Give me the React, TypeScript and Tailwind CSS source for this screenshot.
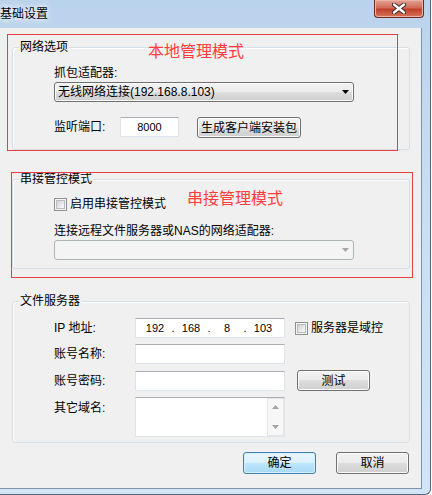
import type { ReactNode } from "react";

function Check() {
    return (
        <span className="flex h-[13px] w-[13px] shrink-0 items-center justify-center border border-[#8e8f8f] bg-[#f4f4f4]">
            <span className="h-[9px] w-[9px] border border-[#b8bcc0] bg-linear-to-br from-[#d0d3d7] to-[#f9f9f9]" />
        </span>
    );
}

function Arrow({ color }: { color: string }) {
    return (
        <svg width="7" height="4" viewBox="0 0 7 4" className="ml-auto mr-[4px]">
            <polygon points="0,0 7,0 3.5,4" fill={color} />
        </svg>
    );
}

function Combo({ text, disabled }: { text?: string; disabled?: boolean }) {
    if (disabled) {
        return (
            <div className="mt-[2px] flex h-[20px] w-[300px] items-center rounded-[3px] border border-[#adb2b5] bg-[#f4f4f4]">
                <Arrow color="#a6a6a6" />
            </div>
        );
    }
    return (
        <div className="mt-[2px] flex h-[20px] w-[300px] items-center rounded-[3px] border border-[#707070] bg-[linear-gradient(#f2f2f2,#ebebeb_50%,#dddddd_50%,#cfcfcf)] pl-[3px] shadow-[inset_0_0_0_1px_#fbfbfb] leading-[18px]">
            <span>{text}</span>
            <Arrow color="#000" />
        </div>
    );
}

function Btn({ children, className }: { children: ReactNode; className: string }) {
    return (
        <div
            className={
                "flex items-center justify-center rounded-[3px] border border-[#707070] bg-[linear-gradient(#f2f2f2,#ebebeb_50%,#dddddd_50%,#cfcfcf)] shadow-[inset_0_0_0_1px_#fcfcfc] " +
                className
            }
        >
            {children}
        </div>
    );
}

function Field({ children, className }: { children?: ReactNode; className: string }) {
    return (
        <div
            className={
                "h-[20px] border border-[#dfe3ea] border-t-[#abadb3] bg-white " + className
            }
        >
            {children}
        </div>
    );
}

function Group({
    title,
    className,
    children,
}: {
    title: string;
    className: string;
    children: ReactNode;
}) {
    return (
        <div
            className={
                "relative ml-[12px] w-[398px] rounded-[3px] border border-[#d5dfe5] shadow-[inset_1px_1px_0_#fff] " +
                className
            }
        >
            <span className="absolute left-[6px] top-[-8px] bg-[#f0f0f0] px-[1px] leading-[14px]">
                {title}
            </span>
            {children}
        </div>
    );
}

export default function App() {
    return (
        <div className="relative h-[495px] w-[432px] bg-white font-['Liberation_Sans','Noto_Sans_CJK_SC',sans-serif] text-[12px] text-black">
            <div className="flex h-[495px] w-[431px] flex-col rounded-br-[6px] border-r border-b border-[#53677d] bg-[linear-gradient(#bad3ec,#c9def3_40%,#d2e5f7)]">
                {/* title bar */}
                <div className="flex h-[28px] items-start justify-between">
                    <span className="mt-[6px] leading-[16px] [text-shadow:0_0_5px_#fff,0_0_8px_#fff]">
                        基础设置
                    </span>
                    <div className="mr-[6px] flex h-[18px] w-[50px] items-center justify-center rounded-b-[4px] border border-t-0 border-[#6b2a22] bg-[linear-gradient(#e3a394,#d06a56_45%,#c0402d_55%,#d77558)] shadow-[inset_0_0_0_1px_#eab3a6]">
                        <svg width="14" height="11" viewBox="0 0 14 11">
                            <path
                                d="M2 1.5 L12 9.5 M12 1.5 L2 9.5"
                                stroke="#3b2522"
                                strokeWidth="4.2"
                                strokeLinecap="round"
                            />
                            <path
                                d="M2 1.5 L12 9.5 M12 1.5 L2 9.5"
                                stroke="#fff"
                                strokeWidth="2.4"
                                strokeLinecap="round"
                            />
                        </svg>
                    </div>
                </div>

                {/* client area */}
                <div className="h-[461px] w-[422px] border-r border-b border-[#7f93a8] bg-[#f0f0f0]">
                    <Group title="网络选项" className="mt-[19px] h-[103px]">
                        <div className="pl-[41px] pt-[18px]">
                            <div className="leading-[14px]">抓包适配器:</div>
                            <Combo text="无线网络连接(192.168.8.103)" />
                            <div className="mt-[15px] flex items-start">
                                <span className="w-[66px] leading-[20px]">监听端口:</span>
                                <Field className="w-[59px] text-center text-[11px] leading-[18px]">
                                    8000
                                </Field>
                                <Btn className="ml-[18px] h-[21px] w-[104px]">生成客户端安装包</Btn>
                            </div>
                        </div>
                    </Group>

                    <Group title="串接管控模式" className="mt-[29px] h-[90px]">
                        <div className="pl-[41px] pt-[17px]">
                            <div className="flex h-[14px] items-center">
                                <Check />
                                <span className="ml-[3px] leading-[14px]">启用串接管控模式</span>
                            </div>
                            <div className="mt-[13px] leading-[14px]">
                                连接远程文件服务器或NAS的网络适配器:
                            </div>
                            <Combo disabled />
                        </div>
                    </Group>

                    <Group title="文件服务器" className="mt-[32px] h-[142px]">
                        <div className="flex flex-col gap-[6px] pl-[41px] pt-[16px]">
                            <div className="flex items-center">
                                <span className="w-[81px] leading-[20px]">IP 地址:</span>
                                <Field className="flex w-[150px] pl-[4px] text-[11px] leading-[18px]">
                                    {["192", "168", "8", "103"].map((n, i) => (
                                        <span key={i} className="flex w-[36px]">
                                            <span className="w-[30px] text-center">{n}</span>
                                            {i < 3 && <span className="w-[6px] text-center">.</span>}
                                        </span>
                                    ))}
                                </Field>
                                <span className="ml-[10px]">
                                    <Check />
                                </span>
                                <span className="ml-[3px] leading-[14px]">服务器是域控</span>
                            </div>
                            <div className="flex items-center">
                                <span className="w-[81px] leading-[20px]">账号名称:</span>
                                <Field className="w-[150px]" />
                            </div>
                            <div className="flex items-center">
                                <span className="w-[81px] leading-[20px]">账号密码:</span>
                                <Field className="w-[150px]" />
                                <Btn className="ml-[12px] h-[21px] w-[73px]">测试</Btn>
                            </div>
                            <div className="flex items-start">
                                <span className="mt-[4px] w-[81px] leading-[14px]">其它域名:</span>
                                <div className="flex h-[40px] w-[150px] border border-[#dfe3ea] border-t-[#abadb3] bg-white">
                                    <div className="flex-1" />
                                    <div className="flex w-[17px] flex-col items-center justify-between border border-[#e6e6e6] bg-[#f7f7f7] py-[6px]">
                                        <svg width="7" height="4" viewBox="0 0 7 4">
                                            <polygon points="0,4 7,4 3.5,0" fill="#a3a3a3" />
                                        </svg>
                                        <svg width="7" height="4" viewBox="0 0 7 4">
                                            <polygon points="0,0 7,0 3.5,4" fill="#a3a3a3" />
                                        </svg>
                                    </div>
                                </div>
                            </div>
                        </div>
                    </Group>

                    <div className="mt-[9px] flex justify-end gap-[20px] pr-[12px]">
                        <div className="flex h-[22px] w-[73px] items-center justify-center rounded-[3px] border border-[#3c7fb1] bg-[linear-gradient(#eaf6fd,#d9f0fc_50%,#bee6fd_50%,#a7d9f5)] shadow-[inset_0_0_0_1px_#d7f0fd]">
                            确定
                        </div>
                        <Btn className="h-[22px] w-[73px]">取消</Btn>
                    </div>
                </div>
            </div>

            {/* annotations */}
            <div className="absolute left-[7px] top-[34px] h-[117px] w-[391px] border border-[#e53f3f]" />
            <div className="absolute left-[11px] top-[172px] h-[106px] w-[402px] border border-[#e53f3f]" />
            <span className="absolute left-[148px] top-[44px] text-[16px] leading-[16px] text-[#ff3d3d]">
                本地管理模式
            </span>
            <span className="absolute left-[187px] top-[191px] text-[16px] leading-[16px] text-[#ff3d3d]">
                串接管理模式
            </span>
        </div>
    );
}
